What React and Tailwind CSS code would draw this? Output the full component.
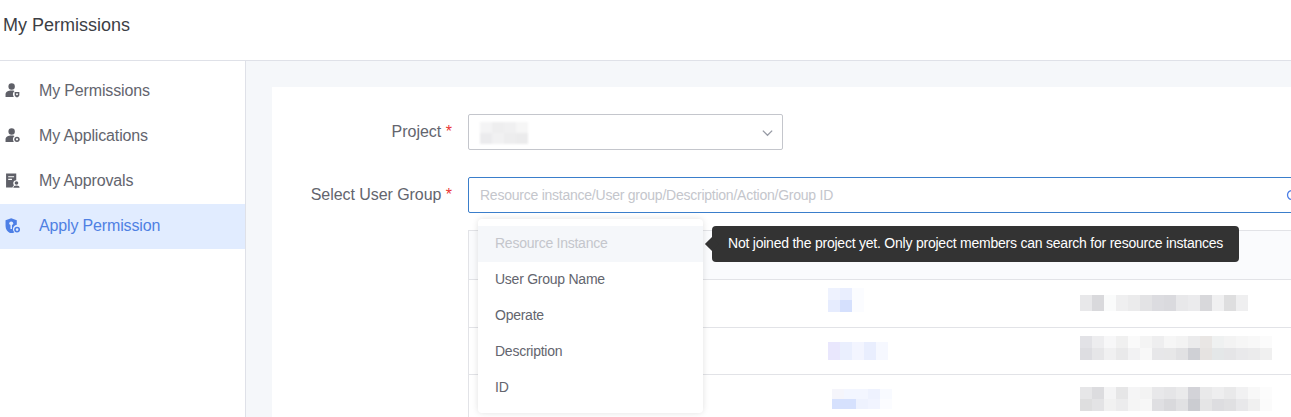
const FONT = { fontFamily: '"Liberation Sans", Arial, sans-serif' };

function UserIcon({ badge }) {
  return (
    <svg width="15" height="15" viewBox="1 1 14 14" className="ml-[1px] shrink-0">
      <circle cx="7.200" cy="4.300" r="3" fill="#5f6068" />
      <path d="M1.500 14v-2.400C1.500 9.300 3.800 8 7.200 8c1 0 1.900.1 2.700.4-1 .8-1.500 2-1.500 3.200 0 .9.300 1.700.8 2.400H1.500z" fill="#5f6068" />
      {badge === "dot" ? (
        <>
          <circle cx="12.200" cy="11.600" r="2.500" fill="#5f6068" />
          <circle cx="12.200" cy="11.600" r="1" fill="#fff" />
        </>
      ) : (
        <>
          <path d="M10 9.500h4.400v2.800c0 1-1 1.700-2.200 2.200-1.200-.5-2.200-1.200-2.200-2.200V9.500z" fill="#5f6068" />
          <circle cx="12.200" cy="11.500" r="0.900" fill="#fff" />
        </>
      )}
    </svg>
  );
}

function ApprovalIcon() {
  return (
    <svg width="15" height="15" viewBox="1 1 14 14" className="ml-[1px] shrink-0">
      <path d="M2 1.500h9.500v6.300c-1.600 0-2.800 1.200-2.800 2.700 0 .8.300 1.500.8 2-.8.400-1.300 1-1.500 2H2V1.500z" fill="#5f6068" />
      <path d="M4 4.500h5.500M4 7h3.500" stroke="#fff" strokeWidth="1.100" />
      <circle cx="11.700" cy="10.300" r="1.700" fill="#5f6068" />
      <path d="M8.800 14.800c0-1.300 1.100-2.100 2.900-2.100s2.900.8 2.900 2.100H8.800z" fill="#5f6068" />
    </svg>
  );
}

function ShieldIcon() {
  return (
    <svg width="15" height="15" viewBox="1 1 14 14" className="ml-[1px] shrink-0">
      <path d="M6.800 1.200 12 3v4.200c-2 .2-3.600 1.900-3.600 4 0 1.200.5 2.300 1.300 3-.8.500-1.800 1-2.900 1.300C3.800 14.500 1.500 12 1.500 8.500V3l5.300-1.800z" fill="#4d7fe6" />
      <circle cx="6.800" cy="6" r="1.800" fill="#e1ecff" />
      <path d="M6.100 7.500h1.400v3.800H6.100z" fill="#e1ecff" />
      <circle cx="12.300" cy="11.800" r="2" fill="none" stroke="#4d7fe6" strokeWidth="1.500" />
    </svg>
  );
}

function NavItem({ icon, label, active }) {
  return (
    <div className={`flex h-[45px] items-center pb-[2px] pl-[4px] text-[16px] tracking-[-0.15px] ${active ? "bg-[#e1ecff] text-[#4f80e3]" : "text-[#63656e]"}`}>
      <span className="w-[35px]">{icon}</span>
      <span>{label}</span>
    </div>
  );
}

function Mosaic({ rows, h = "h-[12px]", className = "" }) {
  return (
    <div className={`flex flex-col ${className}`}>
      {rows.map((row, r) => (
        <div key={r} className="flex">
          {row.map((c, i) => (
            <div key={i} className={`w-[12px] ${h}`} style={{ backgroundColor: c }} />
          ))}
        </div>
      ))}
    </div>
  );
}

const p1 = [
  ["#f4f4f5", "#eeeeef", "#f0f0f1", "#f6f6f6"],
  ["#ebebed", "#f1f1f2", "#ededee", "#ebebec"],
];
const b1 = [
  ["#eef2fe", "#e9eefe", "#fbfcff"],
  ["#e6ecfe", "#d5e0fd", "#fbfcff"],
];
const b2 = [["#e9e7fd", "#eaeffe", "#f3f5ff", "#e9eefe", "#f6f8ff"]];
const b3 = [
  ["#f5f5fb", "#f3f6ff", "#f3f6ff", "#eef2fe", "#f8faff"],
  ["#d6e1fd", "#d6e1fd", "#eef2fe", "#f1f4ff", "#fbfcff"],
];
const g1 = [
  ["#e8e8ea", "#d9d9dc", "#fafbfb", "#efeff0", "#ebebec", "#e3e3e5", "#dcdce0", "#dadade", "#e8e8ea", "#ebebed", "#d8d8db", "#f0f0f1", "#dededf", "#efeff0"],
];
const g2 = [
  ["#e2e2e6", "#ededef", "#f7f7f8", "#f0f0f0", "#fafafa", "#f4f4f4", "#eeeeef", "#f6f6f6", "#f3f3f3", "#ebebec", "#e9e6e4", "#eff1f1", "#f3f3f3", "#f6f6f6", "#f8f8f8", "#fbfbfb"],
  ["#dddde1", "#e6e6e8", "#f0f0f1", "#e9e9ea", "#f2f2f3", "#f8f8f8", "#e7e7e9", "#e7e7e8", "#e1e1e3", "#cfd0d5", "#e6e3e1", "#e4e7e8", "#e5e5e7", "#e9e9eb", "#ebebec", "#f0f0f0"],
];
const g3 = [
  ["#e6e6e8", "#dcdcdf", "#f4f4f5", "#e6e6e7", "#f5f5f6", "#f3f3f3", "#e8e8ea", "#e5e5e7", "#eaeaeb", "#d3d3d8", "#e9e9ea", "#eeeeef", "#e9e9ea", "#f1f1f2", "#f8f8f8", "#fcfcfc"],
  ["#dededf", "#e3e3e5", "#f1f1f1", "#ececed", "#f5f5f5", "#f7f7f7", "#dfdfe2", "#d9d9dc", "#e1e1e3", "#cbccd1", "#e5e5e6", "#dddde0", "#e0e0e2", "#e8e8ea", "#f0f0f0", "#fbfbfb"],
];

function Row({ a, b, last }) {
  return (
    <div className={`flex h-[47.500px] items-center border-b border-[#e2e3e7] pl-[359px] ${last ? "border-b-0" : ""}`}>
      <div className="w-[252px]">{a}</div>
      <div>{b}</div>
    </div>
  );
}

export default function App() {
  return (
    <div style={FONT} className="flex h-[417px] w-[1291px] flex-col overflow-hidden bg-white">
      <header className="flex h-[61px] shrink-0 items-start border-b border-[#dfe1e8] pl-[3px] pt-[15px] text-[18px] leading-[21px] text-[#3c3e45]">
        My Permissions
      </header>
      <div className="flex min-h-0 flex-1">
        <aside className="w-[246px] shrink-0 border-r border-[#dfe1e8] bg-white pt-[8px]">
          <NavItem icon={<UserIcon />} label="My Permissions" />
          <NavItem icon={<UserIcon badge="dot" />} label="My Applications" />
          <NavItem icon={<ApprovalIcon />} label="My Approvals" />
          <NavItem icon={<ShieldIcon />} label="Apply Permission" active />
        </aside>
        <main className="min-w-0 flex-1 overflow-hidden bg-[#f5f7fa] pl-[26px] pt-[26px]">
          <div className="relative h-[400px] w-[1100px] bg-white pt-[27px]">
            <div className="flex items-center">
              <label className="w-[180px] text-right text-[16px] text-[#63656e]">
                Project <span className="text-[#ea3636]">*</span>
              </label>
              <div className="relative ml-[16px] flex h-[36px] w-[315px] items-center justify-end rounded-[2px] border border-[#c4c6cc] pr-[8px]">
                <Mosaic rows={p1} h="h-[11px]" className="absolute left-[11px] top-[7px] blur-[1px]" />
                <svg width="13" height="13" viewBox="0 0 14 14" fill="none" stroke="#979ba5" strokeWidth="1.400">
                  <path d="M2 5l5 5 5-5" />
                </svg>
              </div>
            </div>
            <div className="mt-[27px] flex items-center">
              <label className="w-[180px] text-right text-[16px] tracking-[-0.05px] text-[#63656e]">
                Select User Group <span className="text-[#ea3636]">*</span>
              </label>
              <div className="relative ml-[16px] flex h-[36px] w-[900px] items-center rounded-[2px] border border-[#3a7ecb] pl-[11px] text-[14px] tracking-[-0.24px] text-[#c4c6cc]">
                Resource instance/User group/Description/Action/Group ID
                <svg width="14" height="14" viewBox="0 0 14 14" fill="none" stroke="#4d7fe6" strokeWidth="1.300" className="absolute left-[817px] top-[11px]">
                  <circle cx="6" cy="6" r="4.500" />
                </svg>
              </div>
            </div>
            <div className="ml-[196px] mt-[17px] w-[900px] border-l border-t border-[#e2e3e7]">
              <div className="h-[49px] border-b border-[#e2e3e7] bg-[#fafbfd]" />
              <Row a={<Mosaic rows={b1} className="mb-[6px]" />} b={<Mosaic rows={g1} h="h-[16px]" />} />
              <Row a={<Mosaic rows={b2} h="h-[18px]" />} b={<Mosaic rows={g2} className="mb-[6px]" />} />
              <Row a={<div className="pl-[4px]"><Mosaic rows={b3} h="h-[10px]" /></div>} b={<Mosaic rows={g3} />} last />
            </div>
            <div className="absolute left-[206px] top-[132px] w-[225px] rounded-[4px] bg-white py-[7px] text-[14px] tracking-[-0.25px] text-[#63656e] shadow-[0_0_6px_rgba(0,0,0,0.12)]">
              <div className="flex h-[36px] items-center bg-[#f5f7fa] pb-[2px] pl-[17px] text-[#c4c6cc]">Resource Instance</div>
              <div className="flex h-[36px] items-center pb-[2px] pl-[17px]">User Group Name</div>
              <div className="flex h-[36px] items-center pb-[2px] pl-[17px]">Operate</div>
              <div className="flex h-[36px] items-center pb-[2px] pl-[17px]">Description</div>
              <div className="flex h-[36px] items-center pb-[2px] pl-[17px]">ID</div>
            </div>
            <div className="absolute left-[440px] top-[139px] flex h-[36px] w-[527px] items-center rounded-[4px] bg-[#333333] pb-[2px] pl-[16px] text-[14px] tracking-[-0.225px] whitespace-nowrap text-white">
              <div className="absolute -left-[5px] top-[13px] h-[10px] w-[10px] rotate-45 bg-[#333333]" />
              <span className="relative">Not joined the project yet. Only project members can search for resource instances</span>
            </div>
          </div>
        </main>
      </div>
    </div>
  );
}
